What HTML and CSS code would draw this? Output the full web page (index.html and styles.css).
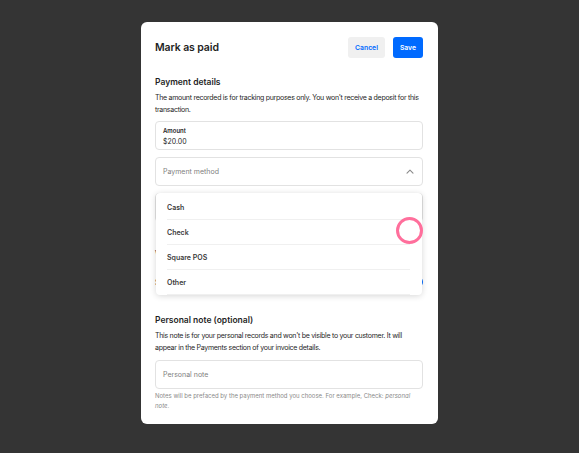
FILE: index.html
```html
<!DOCTYPE html>
<html lang="en">
<head>
    <meta charset="UTF-8">
    <meta name="viewport" content="width=device-width, initial-scale=1.0">
    <title>Mark as paid</title>
    <link rel="stylesheet" href="styles.css">
</head>
<body>
    <div class="modal">
        <div class="modal-header">
            <h1>Mark as paid</h1>
            <div class="actions">
                <button class="btn btn-secondary">Cancel</button>
                <button class="btn btn-primary">Save</button>
            </div>
        </div>

        <h3 class="section-title">Payment details</h3>
        <p class="section-text">The amount recorded is for tracking purposes only. You won't receive a deposit for this transaction.</p>

        <div class="field field-filled">
            <span class="field-label">Amount</span>
            <span class="field-value">$20.00</span>
        </div>

        <div class="select-wrap">
            <div class="field field-select">
                <span class="placeholder">Payment method</span>
                <svg class="chevron" width="8" height="5" viewBox="0 0 8 5">
                    <path d="M1 4.2 L4 1.2 L7 4.2" fill="none" stroke="#8a8a8a" stroke-width="1.1" stroke-linecap="round" stroke-linejoin="round"/>
                </svg>
            </div>
            <ul class="menu">
                <li>Cash</li>
                <li>Check</li>
                <li>Square POS</li>
                <li>Other</li>
            </ul>
        </div>

        <div class="behind">
            <div class="field field-select">
                <span class="placeholder">Payment date</span>
            </div>
            <p class="section-text behind-text">View receipt options</p>
            <div class="toggle-row">
                <span>Send a receipt</span>
                <span class="toggle"></span>
            </div>
        </div>

        <h3 class="section-title note-title">Personal note (optional)</h3>
        <p class="section-text">This note is for your personal records and won't be visible to your customer. It will appear in the Payments section of your invoice details.</p>

        <div class="field note-field">
            <span class="placeholder">Personal note</span>
        </div>
        <p class="help-text">Notes will be prefaced by the payment method you choose. For example, Check: <em>personal note</em>.</p>
    </div>

    <div class="cursor"></div>
</body>
</html>
```

FILE: styles.css
```css
body {
    margin: 0;
    background-color: #343434;
    font-family: Inter, "Noto Sans", Arial, sans-serif;
    color: #1f1f1f;
}
.modal {
    position: relative;
    width: 297px;
    box-sizing: border-box;
    margin: 22px auto 0;
    padding: 15px 15px 13px 14px;
    background: white;
    border-radius: 6px;
}
.modal-header {
    display: flex;
    justify-content: space-between;
    align-items: center;
    height: 21px;
}
.modal-header h1 {
    margin: 0;
    font-size: 10.5px;
    font-weight: 600;
    letter-spacing: -0.1px;
}
.actions {
    display: flex;
    gap: 8px;
}
.btn {
    height: 21px;
    padding: 0 7px;
    border: none;
    border-radius: 3px;
    font-family: inherit;
    font-size: 6.8px;
    font-weight: 600;
    cursor: pointer;
}
.btn-secondary {
    background-color: #f0f0f0;
    color: #006aff;
}
.btn-primary {
    background-color: #006aff;
    color: white;
}
.section-title {
    margin: 17px 0 0;
    font-size: 8.5px;
    line-height: 14px;
    font-weight: 600;
}
.section-text {
    margin: 3px 0 0;
    font-size: 7px;
    letter-spacing: -0.28px;
    line-height: 12px;
    color: #262626;
}
.field {
    display: flex;
    align-items: center;
    height: 29px;
    box-sizing: border-box;
    margin-top: 7px;
    padding: 0 7px;
    border: 1px solid #e2e2e2;
    border-radius: 4px;
}
.field-filled {
    flex-direction: column;
    align-items: flex-start;
    justify-content: center;
    margin-top: 5px;
    padding-top: 2px;
}
.field-label {
    font-size: 6px;
    font-weight: 600;
    line-height: 9px;
}
.field-value {
    font-size: 7px;
    line-height: 13px;
}
.field-select {
    justify-content: space-between;
}
.placeholder {
    font-size: 7px;
    color: #808080;
}
.chevron {
    margin-right: 1px;
}
.select-wrap {
    position: relative;
}
.menu {
    position: absolute;
    top: 36px;
    left: 1px;
    right: 1px;
    z-index: 2;
    margin: 0;
    padding: 2px 12px 0 11px;
    list-style: none;
    background: white;
    border-radius: 4px;
    box-shadow: 0 1px 6px rgba(0, 0, 0, 0.16);
}
.menu li {
    height: 25px;
    line-height: 26px;
    font-size: 7px;
    font-weight: 600;
    color: #3a3a3a;
    border-bottom: 1px solid #f0f0f0;
    box-sizing: border-box;
}
.behind-text {
    margin-top: 26px;
}
.toggle-row {
    display: flex;
    justify-content: space-between;
    align-items: center;
    height: 14px;
    margin-top: 15px;
    font-size: 7px;
}
.toggle {
    width: 24px;
    height: 12px;
    border-radius: 6px;
    background-color: #006aff;
}
.note-title {
    margin-top: 24px;
}
.note-field {
    margin-top: 6px;
}
.help-text {
    margin: 2px 0 0;
    font-size: 6px;
    line-height: 10px;
    color: #8a8a8a;
}
.cursor {
    position: absolute;
    z-index: 5;
    left: 396px;
    top: 217px;
    width: 21px;
    height: 21px;
    border: 3.5px solid #ff6f9c;
    border-radius: 50%;
}
```
